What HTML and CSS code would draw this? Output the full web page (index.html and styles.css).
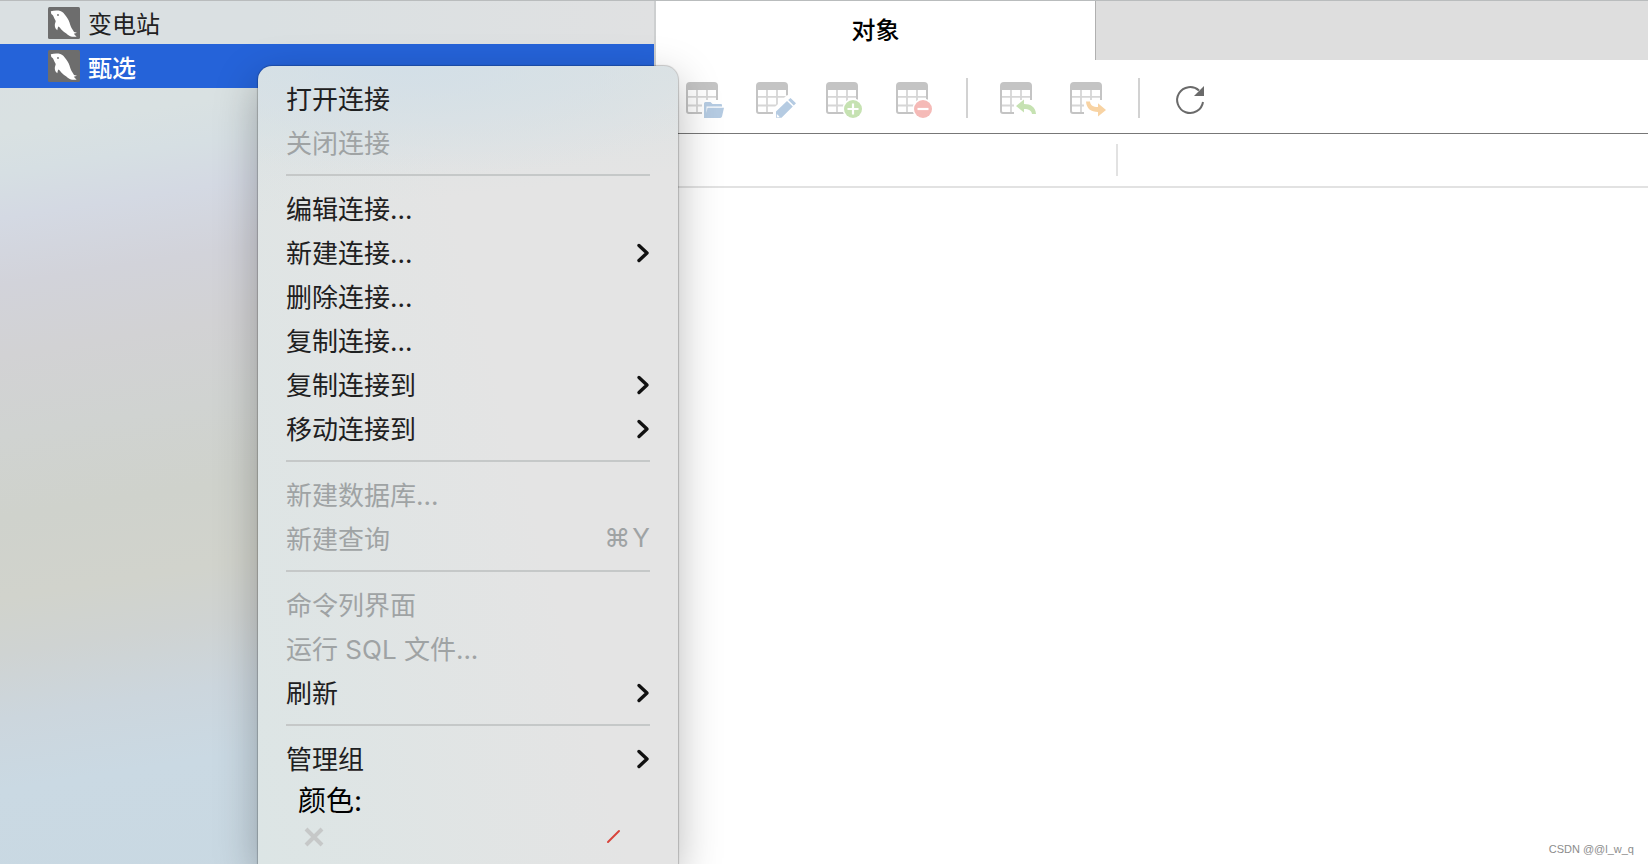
FILE: index.html
```html
<!DOCTYPE html>
<html lang="zh-CN">
<head>
<meta charset="utf-8">
<title>对象</title>
<link rel="stylesheet" href="styles.css">
</head>
<body>
<svg class="defs" aria-hidden="true">
  <symbol id="dolphin" viewBox="0 0 32 32">
    <rect width="32" height="32" rx="1.5" fill="#6d6d6d"/>
    <path fill="#fff" d="M2.800 4.200C5 3.800 7.500 3.200 10.500 3.600c2.500.4 4.500 1.800 6 3.600 2.200 2.600 4 5.300 5 8.300.8 2.300 1.200 4 2.500 6.300.6 1.200 1.400 2 2 3.200l3 .8-3.200 1 2.800 3c-2.600.1-5 0-6.800-.8-1.800-.7-3-2.100-4.600-3.200-2-1.200-3.700-2.800-5.400-5.200-.4-.5-1-.9-1.600-1.100-.5 1.200-.5 2.500-.9 3.800-1.600-1.100-2.500-2.900-2.500-5 0-1.700.8-3 .9-4.300C7 12.500 6 11 5.400 9.300 5 8.200 4.300 7.900 3.300 7Z"/>
    <circle cx="10" cy="8" r=".9" fill="#6d6d6d"/>
  </symbol>
  <symbol id="grid" viewBox="0 0 40 40">
    <path fill="none" stroke="#d6d6d6" stroke-width="1.800" d="M2 18.800h28M2 27.500h28M11 12v22M21 12v22"/>
    <path fill="none" stroke="#c4c4c4" stroke-width="2" d="M1 8v25a2 2 0 0 0 2 2H31V8"/>
    <path fill="#c4c4c4" d="M0 12V8a4 4 0 0 1 4-4h24a4 4 0 0 1 4 4v4Z"/>
  </symbol>
  <symbol id="chevron" viewBox="0 0 14 22">
    <path fill="none" stroke="#111" stroke-width="3.400" stroke-linecap="round" stroke-linejoin="round" d="M3 3.500l8 7.500-8 7.500"/>
  </symbol>
</svg>

<div class="app">
  <nav class="sidebar" aria-label="连接">
    <button class="conn" type="button"><svg class="conn-icon"><use href="#dolphin"/></svg>变电站</button>
    <button class="conn selected" type="button"><svg class="conn-icon"><use href="#dolphin"/></svg>甄选</button>
  </nav>

  <main class="main">
    <div class="tabs" role="tablist">
      <button class="tab" type="button" role="tab" aria-selected="true">对象</button>
    </div>
    <div class="toolbar" role="toolbar">
      <div class="tools">
        <button class="tool" type="button" aria-label="打开表">
          <svg viewBox="0 0 40 40"><use href="#grid" width="40" height="40"/><path fill="#fff" d="M16 22h24v18H16z"/><path fill="#b5cbe2" d="M18 40V25.500a1.500 1.500 0 0 1 1.500-1.500h5l2 2H35a1 1 0 0 1 1 1v1.500H20.500V35l1-5.300H38L36 38.500a2 2 0 0 1-2 1.500Z"/></svg>
        </button>
        <button class="tool" type="button" aria-label="设计表">
          <svg viewBox="0 0 40 40"><use href="#grid" width="40" height="40"/><path fill="#fff" d="M17 40V31L31 17l9 4v19Z"/><path fill="#b5cbe2" d="M20 39.800V33.500L31 23l5.800 5.500L25.500 39.800ZM32.200 22l2.300-2 5.500 5.200-2.200 2.300Z"/><path fill="#fff" d="M20.800 36l2.700 2.500-.8.800h-1.900Z"/></svg>
        </button>
        <button class="tool" type="button" aria-label="新建表">
          <svg viewBox="0 0 40 40"><use href="#grid" width="40" height="40"/><circle cx="27" cy="31" r="10.500" fill="#fff"/><circle cx="27" cy="31" r="9" fill="#c6e2b2"/><path stroke="#fff" stroke-width="2.200" d="M21.500 31h11M27 25.500v11"/></svg>
        </button>
        <button class="tool" type="button" aria-label="删除表">
          <svg viewBox="0 0 40 40"><use href="#grid" width="40" height="40"/><circle cx="27" cy="31" r="10.500" fill="#fff"/><circle cx="27" cy="31" r="9" fill="#f5bab7"/><path stroke="#fff" stroke-width="2.200" d="M21.500 31h11"/></svg>
        </button>
      </div>
      <div class="tools">
        <button class="tool" type="button" aria-label="导入向导">
          <svg viewBox="0 0 40 40"><use href="#grid" width="40" height="40"/><path fill="#fff" d="M14 22h22v16H14z"/><path fill="#c6e2b2" d="M16 28l8-6.500V26c7 0 11.500 3 12 10h-4c-.5-3.500-3-5-8-5v3.500Z"/></svg>
        </button>
        <button class="tool" type="button" aria-label="导出向导">
          <svg viewBox="0 0 40 40"><use href="#grid" width="40" height="40"/><path fill="#fff" d="M14 22h22v16H14z"/><path fill="#f8d3a3" d="M16 23.500h4c.5 4 3 5.500 8 5.500v-3.800l8 6.800-8 6.500V34c-7 0-11.500-3.500-12-10.500Z"/></svg>
        </button>
      </div>
      <div class="tools">
        <button class="tool" type="button" aria-label="刷新">
          <svg viewBox="0 0 40 40"><path fill="none" stroke="#6a6a6a" stroke-width="2" d="M31 24a13 13 0 1 1-4-11.500"/><path fill="#6a6a6a" d="M32 8v10H22Z"/></svg>
        </button>
      </div>
    </div>
    <div class="columns"><span class="column"></span></div>
    <footer class="credit">CSDN @@l_w_q</footer>
  </main>

  <div class="menu" role="menu">
    <button class="item" type="button" role="menuitem">打开连接</button>
    <button class="item" type="button" role="menuitem" disabled>关闭连接</button>
    <hr class="rule">
    <button class="item" type="button" role="menuitem">编辑连接...</button>
    <button class="item" type="button" role="menuitem">新建连接...<svg class="chevron"><use href="#chevron"/></svg></button>
    <button class="item" type="button" role="menuitem">删除连接...</button>
    <button class="item" type="button" role="menuitem">复制连接...</button>
    <button class="item" type="button" role="menuitem">复制连接到<svg class="chevron"><use href="#chevron"/></svg></button>
    <button class="item" type="button" role="menuitem">移动连接到<svg class="chevron"><use href="#chevron"/></svg></button>
    <hr class="rule">
    <button class="item" type="button" role="menuitem" disabled>新建数据库...</button>
    <button class="item" type="button" role="menuitem" disabled>新建查询<span class="keys"><span>⌘</span><span>Y</span></span></button>
    <hr class="rule">
    <button class="item" type="button" role="menuitem" disabled>命令列界面</button>
    <button class="item" type="button" role="menuitem" disabled>运行 SQL 文件...</button>
    <button class="item" type="button" role="menuitem">刷新<svg class="chevron"><use href="#chevron"/></svg></button>
    <hr class="rule">
    <button class="item" type="button" role="menuitem">管理组<svg class="chevron"><use href="#chevron"/></svg></button>
    <div class="colors">
      <span class="colors-label">颜色:</span>
      <div class="swatches">
        <button class="swatch" type="button" aria-label="无颜色"><svg viewBox="0 0 32 32"><path stroke="#c6c8c8" stroke-width="4" d="M8 8l16 16M24 8L8 24"/></svg></button>
        <button class="swatch" type="button" aria-label="自定义颜色"><svg viewBox="0 0 32 32"><path stroke="#d8433a" stroke-width="2" stroke-linecap="round" d="M10 21L21 10"/></svg></button>
      </div>
    </div>
  </div>
</div>
</body>
</html>
```

FILE: styles.css
```css
* {
  box-sizing: border-box;
}

body {
  margin: 0;
  overflow: hidden;
  font-family: Inter, "Noto Sans CJK SC", sans-serif;
  font-size: 24px;
  color: #000;
  background: #fff;
}

button {
  margin: 0;
  padding: 0;
  border: 0;
  background: none;
  font: inherit;
  color: inherit;
  text-align: left;
}

svg {
  display: block;
}

.defs {
  position: absolute;
  width: 0;
  height: 0;
}

.app {
  position: relative;
  display: grid;
  grid-template-columns: 656px 1fr;
  min-height: 100vh;
  border-top: 1px solid #b9bcbd;
}

/* Connection list */

.sidebar {
  border-right: 2px solid #cdcfd0;
  background: linear-gradient(171deg,
    #dae0e2 0, #d9e1e2 130px, #d6dfe3 170px, #d4d9e3 215px,
    #d2d3da 280px, #d2d2d4 350px, #d0d3d1 430px, #cfd2cc 510px,
    #d1d3cc 590px, #cfd3d2 645px, #ccd6dd 710px, #cad9e3 780px, #c8d8e2 100%);
}

.conn {
  display: flex;
  align-items: center;
  gap: 8px;
  width: 100%;
  height: 44px;
  padding-left: 48px;
  color: #222;
}

.conn:first-child {
  height: 43px;
  background: linear-gradient(90deg, #dae0e2 40%, #e0e1e2);
}

.conn.selected {
  background: #2563d9;
  color: #fff;
  font-weight: 500;
}

.conn-icon {
  width: 32px;
  height: 32px;
}

/* Object pane */

.main {
  display: flex;
  flex-direction: column;
}

.tabs {
  height: 59px;
  background: #dedede;
}

.tab {
  width: 440px;
  max-width: 100%;
  height: 100%;
  padding-bottom: 5px;
  border-right: 1px solid #b0b0b0;
  background: #fff;
  text-align: center;
  font-weight: 500;
}

.toolbar {
  display: flex;
  gap: 28px;
  padding: 18px 30px 15px;
  border-bottom: 1px solid #777;
}

.tools {
  display: flex;
  gap: 30px;
}

.tools:first-child {
  padding-right: 2px;
}

.tools + .tools {
  padding-left: 32px;
  border-left: 2px solid #d2d2d2;
}

.tool {
  width: 40px;
  height: 40px;
}

.columns {
  padding: 10px 0;
  border-bottom: 2px solid #e2e2e2;
}

.column {
  display: block;
  width: 462px;
  height: 32px;
  border-right: 2px solid #e2e2e2;
}

.credit {
  margin-top: auto;
  padding: 0 14px 6px;
  text-align: right;
  font: 11px/18px "Liberation Sans", sans-serif;
  color: #8c8c8c;
}

/* Context menu */

.menu {
  position: absolute;
  top: 65px;
  bottom: 0;
  left: 258px;
  width: 420px;
  padding: 11px 28px 0;
  border-radius: 14px 14px 0 0;
  background:
    radial-gradient(ellipse 360px 110px at 36% 0, #d3dfe7, #d3dfe700),
    linear-gradient(174deg, #dae2e3, #dae2e300 150px),
    linear-gradient(75deg, #dce5e5, #dce5e500 360px),
    #e4e4e4;
  box-shadow: 0 0 1px 1px rgba(0, 0, 0, .2), 0 14px 44px rgba(0, 0, 0, .28);
  font-size: 26px;
}

.item {
  display: flex;
  align-items: center;
  justify-content: space-between;
  width: 100%;
  height: 44px;
  padding-bottom: 4px;
  color: #1e2021;
}

.item:disabled {
  color: #9fa3a4;
}

.rule {
  height: 2px;
  margin: 9px 0 11px;
  border: 0;
  background: #c5c8c8;
}

.chevron {
  width: 14px;
  height: 22px;
  margin-top: 3px;
}

.keys {
  display: flex;
  gap: 2px;
}

.colors {
  padding-left: 12px;
}

.colors-label {
  display: block;
  font-size: 28px;
  line-height: 40px;
}

.swatches {
  display: flex;
  justify-content: space-between;
  padding-right: 20px;
}

.swatch {
  width: 32px;
  height: 32px;
}
```
